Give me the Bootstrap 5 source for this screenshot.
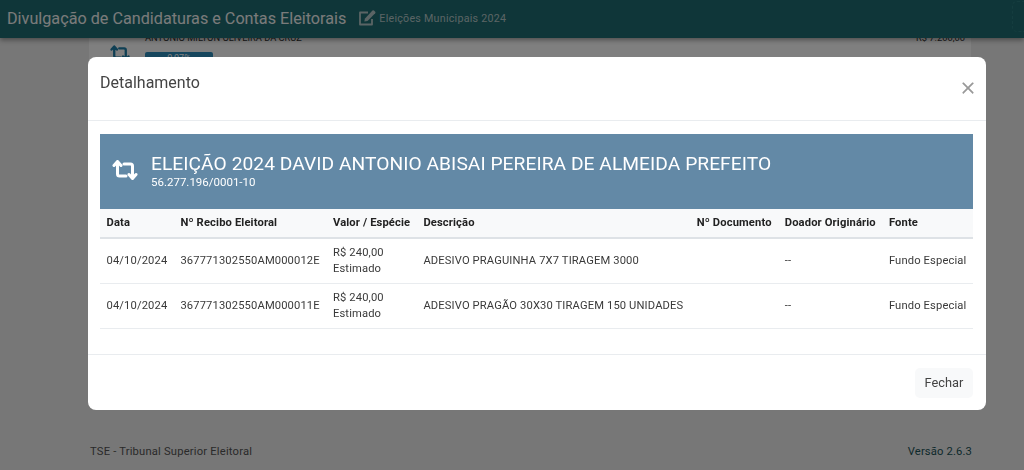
<!DOCTYPE html>
<html lang="pt-BR"><head><meta charset="utf-8"><title>Detalhamento</title>
<link href="https://cdn.jsdelivr.net/npm/bootstrap@5.3.0/dist/css/bootstrap.min.css" rel="stylesheet">
<style>
html,body{height:470px;overflow:hidden}
body{font-family:Roboto,"Liberation Sans",sans-serif;background:#eee;color:#555}
.topbar{height:38px;background:#1f6d72;color:#fff;box-shadow:0 2px 5px rgba(0,0,0,.4);padding:0 7px;position:relative;z-index:2}
.brandname{font-size:16.2px;color:#f4f6f6}
.subname{font-size:10.7px;color:#b6c9ca;letter-spacing:.25px}
.editicon{width:19px;height:19px;margin:0 2px 3px 12px}
.menubtn{width:12px;height:31px;border:1px dashed #2a7a7f;border-right:0;border-radius:5px 0 0 5px;margin-left:auto;margin-right:-7px;margin-bottom:6px}
.behind{height:calc(100% - 38px);padding:0 53px 0 89px}
.behindcard{background:#fff;height:60px;margin-top:-12px;padding:5px 6px 0 21px;font-size:9.3px;color:#333}
.pct{background:#2d8cba;color:#fff;width:68px;height:14px;border-radius:2px;font-size:9px;text-align:center;margin-top:7px}
.behindicon{margin:14px 15px 0 0}
.footline{position:absolute;left:90px;right:52px;bottom:10px;font-size:11.2px;line-height:17px;letter-spacing:.2px;color:#555}
.vers{color:#1c5458;letter-spacing:.15px}
.shade{position:fixed;inset:0;background:rgba(0,0,0,.5);backdrop-filter:blur(.7px);z-index:3}
.modal.dlg{display:block;z-index:4;overflow:hidden}
.modal-dialog.dlgbox{max-width:898px;width:898px;margin:57px 0 0 88px}
.dlgbox .modal-content{border:0;border-radius:8px;height:353px}
.dlgbox .modal-header{height:64px;padding:0 12px;align-items:flex-start;border-bottom:1px solid #e9ecef}
.dlgtitle{font-size:16px;font-weight:400;color:#444;margin:16px 0 0;line-height:20px}
.dlgbox .btn-close{margin:24px -1px 0 auto;padding:0;width:14px;height:14px;background-size:14px;opacity:.4}
.dlgbox .modal-body{padding:13px 13px 0 12px;flex:0 0 233px}
.banner{background:#6389a6;color:#fff;height:75px;padding:19px 0 0 12px}
.banner svg{width:26px;height:20px;margin:7px 13px 0 0;flex:none}
.bannertitle{font-size:19.2px;line-height:22px;letter-spacing:.05px}
.bannersub{font-size:11.5px;line-height:14px}
.dlgtable{font-size:11.2px;margin:0;color:#3a3a3a;letter-spacing:.13px}
.dlgtable th{background:#f8f9fa;font-weight:700;height:29px;padding:1px 6.5px 0;vertical-align:middle;white-space:nowrap;color:#222;border-bottom:2px solid #dee2e6}
.dlgtable td{height:45px;padding:0 6.5px;vertical-align:middle;line-height:16px;white-space:nowrap;border-bottom:1px solid #e9ecef}
.dlgbox .modal-footer{height:56px;padding:0 13px 0 0;border-top:1px solid #e9ecef;align-items:center}
.closebtn{background:#f8f9fa;border:0;color:#444;font-size:12.8px;width:58px;height:30px;padding:0;margin:0;border-radius:5px}
</style></head>
<body>
<header class="topbar d-flex align-items-center">
  <span class="brandname">Divulgação de Candidaturas e Contas Eleitorais</span>
  <svg class="editicon" viewBox="0 0 19 19" fill="none" stroke="#b6c9ca" stroke-width="1.8" stroke-linejoin="round"><path d="M14 11v5.500H2V4.500h8"/><path fill="#b6c9ca" stroke="none" d="M7 10.500L14.500 2.500a1 1 0 0 1 1.400 0l1.300 1.300a1 1 0 0 1 0 1.400L9.500 13l-3.200.6z"/></svg>
  <span class="subname">Eleições Municipais 2024</span>
  <span class="menubtn"></span>
</header>
<main class="behind">
  <div class="behindcard d-flex">
    <svg class="behindicon" width="20" height="16" viewBox="0 0 26 20" fill="none" stroke="#1f7fa8" stroke-width="3" stroke-linecap="round" stroke-linejoin="round"><path d="M5.500 2v12a2 2 0 0 0 2 2H14M2 5.500L5.500 1.500 9 5.500M20.500 18V6a2 2 0 0 0-2-2H12M17 14.500l3.500 4 3.500-4"/></svg>
    <div class="flex-grow-1"><div>ANTONIO MILTON OLIVEIRA DA CRUZ</div><div class="pct">0,07%</div></div>
    <div>R$ 7.200,00</div>
  </div>
</main>
<footer class="footline d-flex justify-content-between"><span>TSE - Tribunal Superior Eleitoral</span><span class="vers">Versão 2.6.3</span></footer>
<div class="shade"></div>
<div class="modal dlg" tabindex="-1">
  <div class="modal-dialog dlgbox">
    <div class="modal-content">
      <div class="modal-header">
        <h5 class="dlgtitle">Detalhamento</h5>
        <button type="button" class="btn-close" aria-label="Close"></button>
      </div>
      <div class="modal-body">
        <div class="banner d-flex">
          <svg viewBox="0 0 26 20" fill="none" stroke="#fff" stroke-width="3" stroke-linecap="round" stroke-linejoin="round"><path d="M5.500 2v12a2 2 0 0 0 2 2H14M2 5.500L5.500 1.500 9 5.500M20.500 18V6a2 2 0 0 0-2-2H12M17 14.500l3.500 4 3.500-4"/></svg>
          <div><div class="bannertitle">ELEIÇÃO 2024 DAVID ANTONIO ABISAI PEREIRA DE ALMEIDA PREFEITO</div><div class="bannersub">56.277.196/0001-10</div></div>
        </div>
        <table class="table dlgtable">
          <thead><tr><th>Data</th><th>Nº Recibo Eleitoral</th><th>Valor / Espécie</th><th>Descrição</th><th>Nº Documento</th><th>Doador Originário</th><th>Fonte</th></tr></thead>
          <tbody>
            <tr><td>04/10/2024</td><td>367771302550AM000012E</td><td>R$ 240,00<br>Estimado</td><td>ADESIVO PRAGUINHA 7X7 TIRAGEM 3000</td><td></td><td>--</td><td>Fundo Especial</td></tr>
            <tr><td>04/10/2024</td><td>367771302550AM000011E</td><td>R$ 240,00<br>Estimado</td><td>ADESIVO PRAGÃO 30X30 TIRAGEM 150 UNIDADES</td><td></td><td>--</td><td>Fundo Especial</td></tr>
          </tbody>
        </table>
      </div>
      <div class="modal-footer"><button type="button" class="btn closebtn">Fechar</button></div>
    </div>
  </div>
</div>
<script src="https://cdn.jsdelivr.net/npm/bootstrap@5.3.0/dist/js/bootstrap.bundle.min.js"></script>
</body></html>
